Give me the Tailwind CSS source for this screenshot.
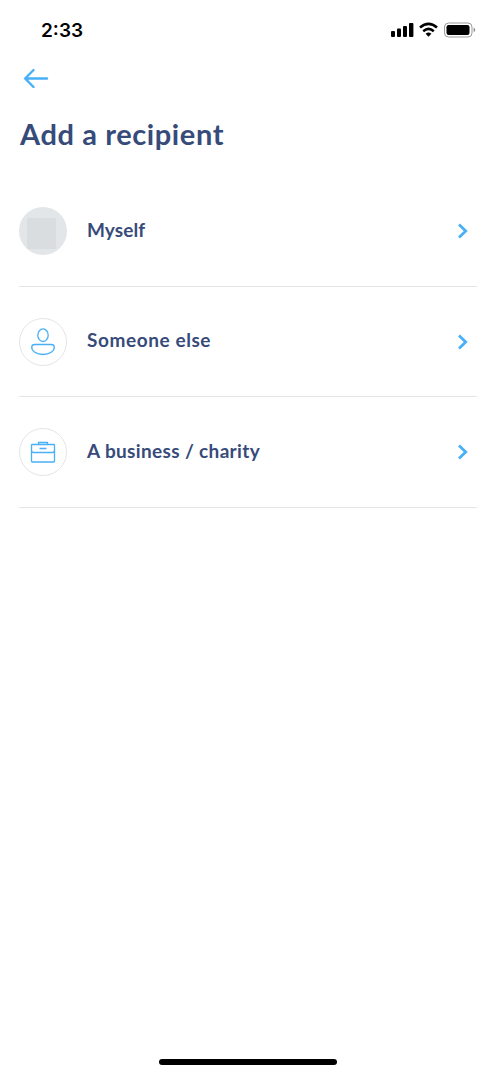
<!DOCTYPE html>
<html lang="en">
<head>
  <meta charset="UTF-8">
  <meta name="viewport" content="width=device-width, initial-scale=1.0">
  <title>Add a recipient</title>
  <script src="https://cdn.jsdelivr.net/npm/@tailwindcss/browser@4"></script>
</head>
<body class="bg-white h-[1075px] flex flex-col overflow-hidden font-['Lato',sans-serif] text-[#374b7a]">
  <!-- Status bar -->
  <div class="h-[60px] pl-[41px] pr-5 flex items-center justify-between text-black">
    <span class="mt-0.5 font-['Inter',sans-serif] font-semibold text-[19px] leading-6">2:33</span>
    <svg class="w-[85px] h-5" viewBox="0 0 85 20" fill="none">
      <rect x="0" y="11" width="4" height="6" rx="1" fill="black"/>
      <rect x="6" y="8.5" width="4" height="8.5" rx="1" fill="black"/>
      <rect x="12" y="6" width="4" height="11" rx="1" fill="black"/>
      <rect x="18" y="3" width="4.4" height="14" rx="1" fill="black"/>
      <path d="M29 7.4Q37.5 .2 46 7.4" stroke="black" stroke-width="2.6"/>
      <path d="M32.2 11.2Q37.5 6.6 42.8 11.2" stroke="black" stroke-width="2.5"/>
      <path d="M34.6 13.7Q37.5 11.5 40.4 13.7L37.5 16.8Z" fill="black"/>
      <rect x="53.5" y="3" width="27.5" height="14" rx="4" stroke="#999"/>
      <rect x="55.5" y="5" width="23" height="10" rx="2.2" fill="black"/>
      <path d="M82.7 7.8Q84.2 8.4 84.2 10T82.7 12.2Z" fill="#888"/>
    </svg>
  </div>

  <div class="px-[19px]">
    <button class="block ml-1 mt-2 h-[26px]">
      <svg class="w-[26px] h-5 mb-1.5" viewBox="0 0 26 20" fill="none" stroke="#48b0f7" stroke-width="2.4" stroke-linecap="round">
        <path d="M24 10.5H2.5M10.5 2L2.2 10.5L10.5 19"/>
      </svg>
    </button>
    <h1 class="mt-[22px] ml-px font-bold text-[29px] leading-9 tracking-[0.6px] whitespace-nowrap">Add a recipient</h1>

    <ul class="mt-[24px]">
      <li class="h-[110.5px] border-b border-[#e2e6e8] flex items-center">
        <div class="mt-px size-12 rounded-full bg-[#e2e6e8] flex items-center justify-center">
          <div class="w-[29px] h-[31px] -ml-[3px] mt-1 bg-[#dadddf]"></div>
        </div>
        <span class="ml-5 -mt-px flex-1 font-bold text-[19px] tracking-[0.1px]">Myself</span>
        <svg class="w-3 h-4 mr-2 mt-px" viewBox="0 0 12 16" fill="none" stroke="#48b0f7" stroke-width="2.8">
          <path d="M2 1.5L8.7 8L2 14.5"/>
        </svg>
      </li>
      <li class="h-[110.5px] border-b border-[#e2e6e8] flex items-center">
        <div class="mt-px size-12 rounded-full border border-[#e2e6e8] flex items-center justify-center">
          <svg class="size-7" viewBox="0 0 28 28" fill="none" stroke="#48b0f7" stroke-width="1.3">
            <ellipse cx="14" cy="7.2" rx="5.2" ry="6.3"/>
            <path d="M6 16.5H22C24.3 16.5 25.3 17.5 25.3 19.3C25.3 23 20.8 26.5 14 26.5S2.7 23 2.7 19.3C2.7 17.5 3.7 16.5 6 16.5Z"/>
          </svg>
        </div>
        <span class="ml-5 -mt-[3px] flex-1 font-bold text-[19px] tracking-[0.58px]">Someone else</span>
        <svg class="w-3 h-4 mr-2 mt-px" viewBox="0 0 12 16" fill="none" stroke="#48b0f7" stroke-width="2.8">
          <path d="M2 1.5L8.7 8L2 14.5"/>
        </svg>
      </li>
      <li class="h-[110.5px] border-b border-[#e2e6e8] flex items-center">
        <div class="mt-px size-12 rounded-full border border-[#e2e6e8] flex items-center justify-center">
          <svg class="size-7" viewBox="0 0 28 28" fill="none" stroke="#48b0f7" stroke-width="1.3">
            <rect x="2.5" y="6.5" width="23" height="17.5" rx=".8"/>
            <path d="M9.5 6.5V4.5H18.5V6.5M2.5 12.5Q2.5 14.5 4.5 14.5H23.5Q25.5 14.5 25.5 12.5M10.5 10.5H17.5"/>
          </svg>
        </div>
        <span class="ml-5 -mt-[2px] flex-1 font-bold text-[19px] tracking-[0.35px]">A business / charity</span>
        <svg class="w-3 h-4 mr-2 mt-px" viewBox="0 0 12 16" fill="none" stroke="#48b0f7" stroke-width="2.8">
          <path d="M2 1.5L8.7 8L2 14.5"/>
        </svg>
      </li>
    </ul>
  </div>

  <!-- Home indicator -->
  <div class="mt-auto mb-[10px] mx-auto w-[178px] h-[6px] rounded-full bg-black"></div>
</body>
</html>
